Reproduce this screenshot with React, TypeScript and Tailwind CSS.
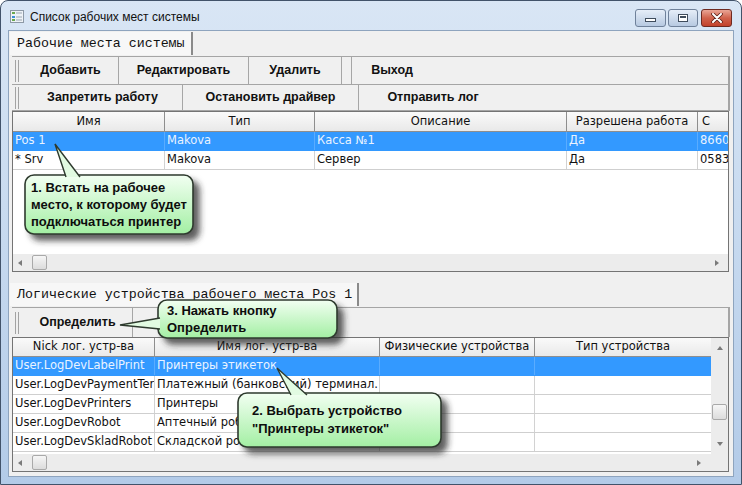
import React from 'react';

const sans = "font-['Liberation_Sans',Arial,sans-serif]";
const mono = "font-['Liberation_Mono','Courier_New',monospace]";
const grid = "font-['DejaVu_Sans',Verdana,sans-serif] text-[11.5px]";

const Grip = () => (
  <div className="ml-[3px] mr-[4px] h-[22px] w-[4px] shrink-0 border-x border-[#a3a3a3]" />
);

const ToolButton = ({ label, className }: { label: string; className: string }) => (
  <div
    className={`flex h-full shrink-0 items-center justify-center border-r border-[#a6a6a6] text-[12.5px] font-bold text-[#111] ${className}`}
  >
    {label}
  </div>
);

const TabStrip = ({ label, className }: { label: string; className: string }) => (
  <div className="flex h-[24px] shrink-0 items-end pl-[1px]">
    <div
      className={`flex h-[23px] items-center border-r-2 border-[#8a8a8a] bg-[#f7f7f7] pl-[7px] text-[13.3px] text-[#111] ${mono} ${className}`}
    >
      {label}
    </div>
  </div>
);

const Arrow = ({ dir }: { dir: 'l' | 'r' | 'u' | 'd' }) => {
  const pts = {
    l: '5,1 5,7 1,4',
    r: '1,1 1,7 5,4',
    u: '1,6 7,6 4,2',
    d: '1,2 7,2 4,6',
  }[dir];
  return (
    <svg width="8" height="8" viewBox="0 0 8 8" className="shrink-0">
      <polygon points={pts} fill="#7a7a7a" />
    </svg>
  );
};

const Thumb = ({ className }: { className: string }) => (
  <div
    className={`shrink-0 rounded-[2px] border border-[#a9a9a9] bg-gradient-to-b from-[#f6f6f6] to-[#dcdcdc] ${className}`}
  />
);

const HScroll = ({ arrowRight }: { arrowRight: string }) => (
  <div className="flex h-[17px] shrink-0 items-center bg-[#ececec] pl-[4px]">
    <Arrow dir="l" />
    <Thumb className="ml-[7px] h-[15px] w-[15px]" />
    <div className={arrowRight}>
      <Arrow dir="r" />
    </div>
  </div>
);

const topCols = [
  { w: 'w-[152px]', h: 'Имя', c: 'justify-center' },
  { w: 'w-[150px]', h: 'Тип', c: 'justify-center' },
  { w: 'w-[252px]', h: 'Описание', c: 'justify-center' },
  { w: 'w-[131px]', h: 'Разрешена работа', c: 'justify-center' },
  { w: 'w-[60px]', h: 'С', c: 'justify-start pl-[4px]' },
];

const topRows = [
  ['Pos 1', 'Makova', 'Касса №1', 'Да', '8660'],
  ['* Srv', 'Makova', 'Сервер', 'Да', '0583'],
];

const botCols = [
  { w: 'w-[142px]', h: 'Nick лог. устр-ва' },
  { w: 'w-[225px]', h: 'Имя лог. устр-ва' },
  { w: 'w-[155px]', h: 'Физические устройства' },
  { w: 'w-[177px]', h: 'Тип устройства' },
];

const botRows = [
  ['User.LogDevLabelPrint', 'Принтеры этикеток'],
  ['User.LogDevPaymentTerminal', 'Платежный (банковский) терминал.'],
  ['User.LogDevPrinters', 'Принтеры'],
  ['User.LogDevRobot', 'Аптечный робот'],
  ['User.LogDevSkladRobot', 'Складской робот'],
];

const HeaderCell = ({ w, label, c = 'justify-center' }: { w: string; label: string; c?: string }) => (
  <div
    className={`flex h-full shrink-0 items-center overflow-hidden whitespace-nowrap border-r border-[#8e8e8e] text-[#111] ${c} ${w}`}
  >
    {label}
  </div>
);

type CalloutProps = {
  x: number;
  y: number;
  w: number;
  h: number;
  tail: [number, number][];
  id: string;
};

// speech bubble outline: box + tail, drawn as a single picture
const CalloutShape = ({ x, y, w, h, tail, id }: CalloutProps) => {
  const [a, tip, b] = tail;
  return (
    <g>
      <defs>
        <linearGradient id={id} x1="0" y1="0" x2="0" y2="1">
          <stop offset="0" stopColor="#f2fff2" />
          <stop offset="1" stopColor="#a3efa3" />
        </linearGradient>
      </defs>
      <g filter="url(#shadow)">
        <rect x={x} y={y} width={w} height={h} rx="9" fill={`url(#${id})`} stroke="#2e3a2e" strokeWidth="1.6" />
      </g>
      <polygon points={`${a[0]},${a[1]} ${tip[0]},${tip[1]} ${b[0]},${b[1]}`} fill="#e2fbe2" />
      <polyline
        points={`${a[0]},${a[1]} ${tip[0]},${tip[1]} ${b[0]},${b[1]}`}
        fill="none"
        stroke="#2e3a2e"
        strokeWidth="1.4"
        strokeLinejoin="miter"
      />
    </g>
  );
};

const TitleIcon = () => (
  <svg width="14" height="13" viewBox="0 0 14 13">
    <rect x="0.5" y="0.5" width="13" height="12" fill="#eef2f6" stroke="#8d99a6" />
    <rect x="2" y="2" width="3" height="2" fill="#6aa84f" />
    <rect x="6" y="2.5" width="6" height="1" fill="#9aa5b1" />
    <rect x="2" y="6" width="3" height="2" fill="#3c8fd6" />
    <rect x="6" y="6.5" width="6" height="1" fill="#9aa5b1" />
    <rect x="2" y="9" width="3" height="2" fill="#6aa84f" />
    <rect x="6" y="9.5" width="6" height="1" fill="#9aa5b1" />
  </svg>
);

export default function App() {
  return (
    <div className={`relative h-[485px] w-[742px] overflow-hidden bg-white ${sans}`}>
      <div className="flex h-full flex-col rounded-t-[8px] border border-[#42536a] bg-gradient-to-b from-[#d9e6f5] via-[#c6d9ef] to-[#b3cbe8] px-[7px] pb-[7px]">
        {/* title bar */}
        <div className="flex h-[29px] shrink-0 items-center">
          <div className="ml-[2px] mt-[2px]">
            <TitleIcon />
          </div>
          <span className="ml-[6px] mt-[2px] text-[12px] text-[#111]">Список рабочих мест системы</span>
          <div className="ml-auto mr-[2px] flex gap-[2px] self-start pt-[8px]">
            <div className="flex h-[18px] w-[31px] items-end justify-center rounded-[3px] border border-[#6f819a] bg-gradient-to-b from-[#e6eef8] to-[#b7c9e1] pb-[4px]">
              <div className="h-[4px] w-[11px] border border-[#3f4c5c] bg-white" />
            </div>
            <div className="flex h-[18px] w-[30px] items-center justify-center rounded-[3px] border border-[#6f819a] bg-gradient-to-b from-[#e6eef8] to-[#b7c9e1]">
              <div className="h-[8px] w-[10px] border border-[#3f4c5c] bg-white">
                <div className="m-[1px] h-[2px] border border-[#3f4c5c]" />
              </div>
            </div>
            <div className="ml-[1px] flex h-[18px] w-[31px] items-center justify-center rounded-[3px] border border-[#6e2a21] bg-gradient-to-b from-[#e9a596] via-[#d0624c] to-[#c2412b]">
              <svg width="12" height="10" viewBox="0 0 12 10">
                <path d="M2 1 L10 9 M10 1 L2 9" stroke="#5a1f17" strokeWidth="3.6" strokeLinecap="round" />
                <path d="M2 1 L10 9 M10 1 L2 9" stroke="#ffffff" strokeWidth="2" strokeLinecap="round" />
              </svg>
            </div>
          </div>
        </div>

        {/* client area */}
        <div className="flex min-h-0 flex-1 flex-col border border-[#8ea4be] bg-[#f0f0f0]">
          <TabStrip label="Рабочие места системы" className="w-[183px]" />

          {/* toolbars */}
          <div className="ml-[3px] mr-[3px] mt-[1px] shrink-0 border-r-2 border-t border-[#a5a5a5]">
            <div className="flex h-[28px] items-center border-b border-[#a5a5a5]">
              <Grip />
              <ToolButton label="Добавить" className="w-[96px]" />
              <ToolButton label="Редактировать" className="w-[130px]" />
              <ToolButton label="Удалить" className="w-[93px]" />
              <div className="h-full w-[10px] border-r border-[#a6a6a6]" />
              <ToolButton label="Выход" className="w-[80px] border-r-0" />
            </div>
            <div className="flex h-[26px] items-center border-b border-[#a5a5a5]">
              <Grip />
              <ToolButton label="Запретить работу" className="w-[160px]" />
              <ToolButton label="Остановить драйвер" className="w-[176px]" />
              <ToolButton label="Отправить лог" className="w-[148px] border-r-0" />
            </div>
          </div>

          {/* workplaces grid */}
          <div className={`ml-[3px] mr-[4px] flex h-[161px] shrink-0 flex-col overflow-hidden border border-[#747474] bg-white ${grid}`}>
            <div className="flex h-[20px] shrink-0 border-b border-[#8e8e8e] bg-gradient-to-b from-[#fafafa] to-[#e9e9e9]">
              {topCols.map((c) => (
                <HeaderCell key={c.h} w={c.w} label={c.h} c={c.c} />
              ))}
            </div>
            {topRows.map((r, i) => (
              <div
                key={i}
                className={`flex h-[19px] shrink-0 border-b ${i === 0 ? 'border-[#3399ff] bg-[#3399ff] text-[#eaf3ff]' : 'border-[#cfcfcf] text-[#111]'}`}
              >
                {r.map((v, j) => (
                  <div
                    key={j}
                    className={`flex h-full shrink-0 items-center overflow-hidden whitespace-nowrap px-[2px] ${topCols[j].w} ${i === 0 ? 'border-r border-[#5aacff]' : 'border-r border-[#d2d2d2]'}`}
                  >
                    {v}
                  </div>
                ))}
              </div>
            ))}
            <div className="flex-1" />
            <HScroll arrowRight="ml-auto mr-[6px]" />
          </div>

          <div className="h-[10px] shrink-0" />

          <TabStrip label="Логические устройства рабочего места Pos 1" className="w-[349px]" />

          <div className="ml-[3px] mr-[3px] mt-[1px] flex h-[30px] shrink-0 items-center border-r-2 border-t border-[#a5a5a5]">
            <Grip />
            <ToolButton label="Определить" className="w-[110px]" />
          </div>

          {/* logical devices grid */}
          <div className={`mb-[4px] ml-[3px] mr-[4px] flex min-h-0 flex-1 flex-col overflow-hidden border border-[#747474] bg-white ${grid}`}>
            <div className="flex min-h-0 flex-1">
              <div className="flex min-w-0 flex-1 flex-col">
                <div className="flex h-[19px] shrink-0 border-b border-[#8e8e8e] bg-gradient-to-b from-[#fafafa] to-[#e9e9e9]">
                  {botCols.map((c) => (
                    <HeaderCell key={c.h} w={c.w} label={c.h} />
                  ))}
                </div>
                {botRows.map((r, i) => (
                  <div
                    key={i}
                    className={`flex h-[19px] shrink-0 border-b ${i === 0 ? 'border-[#3399ff] bg-[#3399ff] text-[#eaf3ff]' : 'border-[#cfcfcf] text-[#111]'}`}
                  >
                    {botCols.map((c, j) => (
                      <div
                        key={j}
                        className={`flex h-full shrink-0 items-center overflow-hidden whitespace-nowrap px-[2px] ${c.w} ${i === 0 ? 'border-r border-[#5aacff]' : 'border-r border-[#d2d2d2]'}`}
                      >
                        {r[j] ?? ''}
                      </div>
                    ))}
                  </div>
                ))}
              </div>
              {/* vertical scrollbar */}
              <div className="flex w-[17px] shrink-0 flex-col items-center bg-[#ececec] pb-[6px] pt-[6px]">
                <Arrow dir="u" />
                <Thumb className="mt-[52px] h-[16px] w-[15px]" />
                <div className="mt-auto">
                  <Arrow dir="d" />
                </div>
              </div>
            </div>
            <HScroll arrowRight="ml-auto mr-[24px]" />
          </div>
        </div>
      </div>

      {/* annotation callouts */}
      <svg className="pointer-events-none absolute left-0 top-0" width="742" height="485">
        <defs>
          <filter id="shadow" x="-20%" y="-30%" width="150%" height="180%">
            <feDropShadow dx="6" dy="6" stdDeviation="3" floodColor="#2a2a2a" floodOpacity="0.75" />
          </filter>
        </defs>
        <CalloutShape id="g1" x={25} y={175} w={168} h={59} tail={[[66, 177], [55, 144], [80, 177]]} />
        <CalloutShape id="g3" x={158} y={300} w={179} h={38} tail={[[160, 318], [120, 325], [160, 329]]} />
        <CalloutShape id="g2" x={238} y={393} w={203} h={54} tail={[[291, 395], [277, 368], [307, 395]]} />
      </svg>

      <div className="absolute left-[31px] top-[179px] text-[13px] font-bold leading-[17px] text-[#0d0d0d]">
        <div>1. Встать на рабочее</div>
        <div>место, к которому будет</div>
        <div>подключаться принтер</div>
      </div>
      <div className="absolute left-[167px] top-[302px] text-[13px] font-bold leading-[17px] text-[#0d0d0d]">
        <div>3. Нажать кнопку</div>
        <div>Определить</div>
      </div>
      <div className="absolute left-[252px] top-[402px] text-[13px] font-bold leading-[18px] text-[#0d0d0d]">
        <div>2. Выбрать устройство</div>
        <div>"Принтеры этикеток"</div>
      </div>
    </div>
  );
}
